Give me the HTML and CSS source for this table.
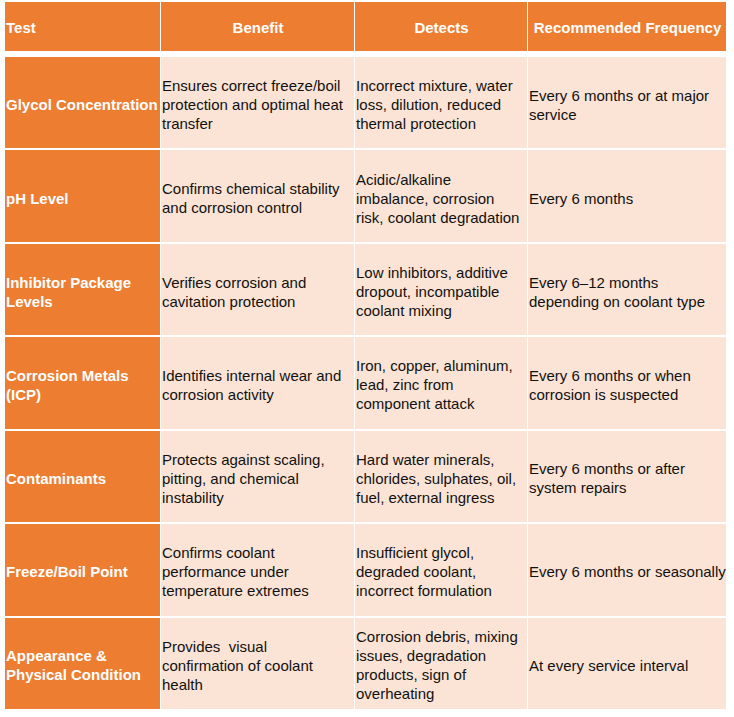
FILE: index.html
```html
<!DOCTYPE html>
<html>
<head>
<meta charset="utf-8">
<title>Coolant Tests</title>
<link rel="stylesheet" href="styles.css">
</head>
<body>
<div class="sheet">
  <div class="grid head">
    <div class="cell th left">Test</div>
    <div class="cell th">Benefit</div>
    <div class="cell th">Detects</div>
    <div class="cell th">Recommended Frequency</div>
  </div>
  <div class="grid body">
    <div class="cell name">Glycol Concentration</div>
    <div class="cell">Ensures correct freeze/boil<br>protection and optimal heat<br>transfer</div>
    <div class="cell">Incorrect mixture, water<br>loss, dilution, reduced<br>thermal protection</div>
    <div class="cell">Every 6 months or at major<br>service</div>

    <div class="cell name">pH Level</div>
    <div class="cell">Confirms chemical stability<br>and corrosion control</div>
    <div class="cell">Acidic/alkaline<br>imbalance, corrosion<br>risk, coolant degradation</div>
    <div class="cell">Every 6 months</div>

    <div class="cell name">Inhibitor Package<br>Levels</div>
    <div class="cell">Verifies corrosion and<br>cavitation protection</div>
    <div class="cell">Low inhibitors, additive<br>dropout, incompatible<br>coolant mixing</div>
    <div class="cell">Every 6–12 months<br>depending on coolant type</div>

    <div class="cell name">Corrosion Metals<br>(ICP)</div>
    <div class="cell">Identifies internal wear and<br>corrosion activity</div>
    <div class="cell">Iron, copper, aluminum,<br>lead, zinc from<br>component attack</div>
    <div class="cell">Every 6 months or when<br>corrosion is suspected</div>

    <div class="cell name">Contaminants</div>
    <div class="cell">Protects against scaling,<br>pitting, and chemical<br>instability</div>
    <div class="cell">Hard water minerals,<br>chlorides, sulphates, oil,<br>fuel, external ingress</div>
    <div class="cell">Every 6 months or after<br>system repairs</div>

    <div class="cell name">Freeze/Boil Point</div>
    <div class="cell">Confirms coolant<br>performance under<br>temperature extremes</div>
    <div class="cell">Insufficient glycol,<br>degraded coolant,<br>incorrect formulation</div>
    <div class="cell">Every 6 months or seasonally</div>

    <div class="cell name">Appearance &amp;<br>Physical Condition</div>
    <div class="cell">Provides&nbsp; visual<br>confirmation of coolant<br>health</div>
    <div class="cell">Corrosion debris, mixing<br>issues, degradation<br>products, sign of<br>overheating</div>
    <div class="cell">At every service interval</div>
  </div>
</div>
</body>
</html>
```
FILE: styles.css
```css
html, body {
  margin: 0;
  padding: 0;
  background: #ffffff;
}

body {
  font-family: "Liberation Sans", Arial, sans-serif;
  font-size: 15px;
  line-height: 19px;
  color: #111111;
}

.sheet {
  margin: 2px 0 0 5px;
  width: 721px;
}

.grid {
  display: grid;
  grid-template-columns: 155px 193px 172px 198px;
  column-gap: 1px;
}

.head {
  grid-template-rows: 48.5px;
}

.body {
  margin-top: 6.5px;
  grid-auto-rows: 91.43px;
  row-gap: 2px;
}

.cell {
  display: flex;
  align-items: center;
  padding: 4px 0 0 1px;
  background: #fbe4d5;
  box-sizing: border-box;
  white-space: nowrap;
}

.th {
  background: #ed7d31;
  color: #ffffff;
  font-weight: bold;
  justify-content: center;
  text-align: center;
  padding-top: 2px;
}

.th.left {
  justify-content: flex-start;
  text-align: left;
}

.name {
  background: #ed7d31;
  color: #ffffff;
  font-weight: bold;
}
```
